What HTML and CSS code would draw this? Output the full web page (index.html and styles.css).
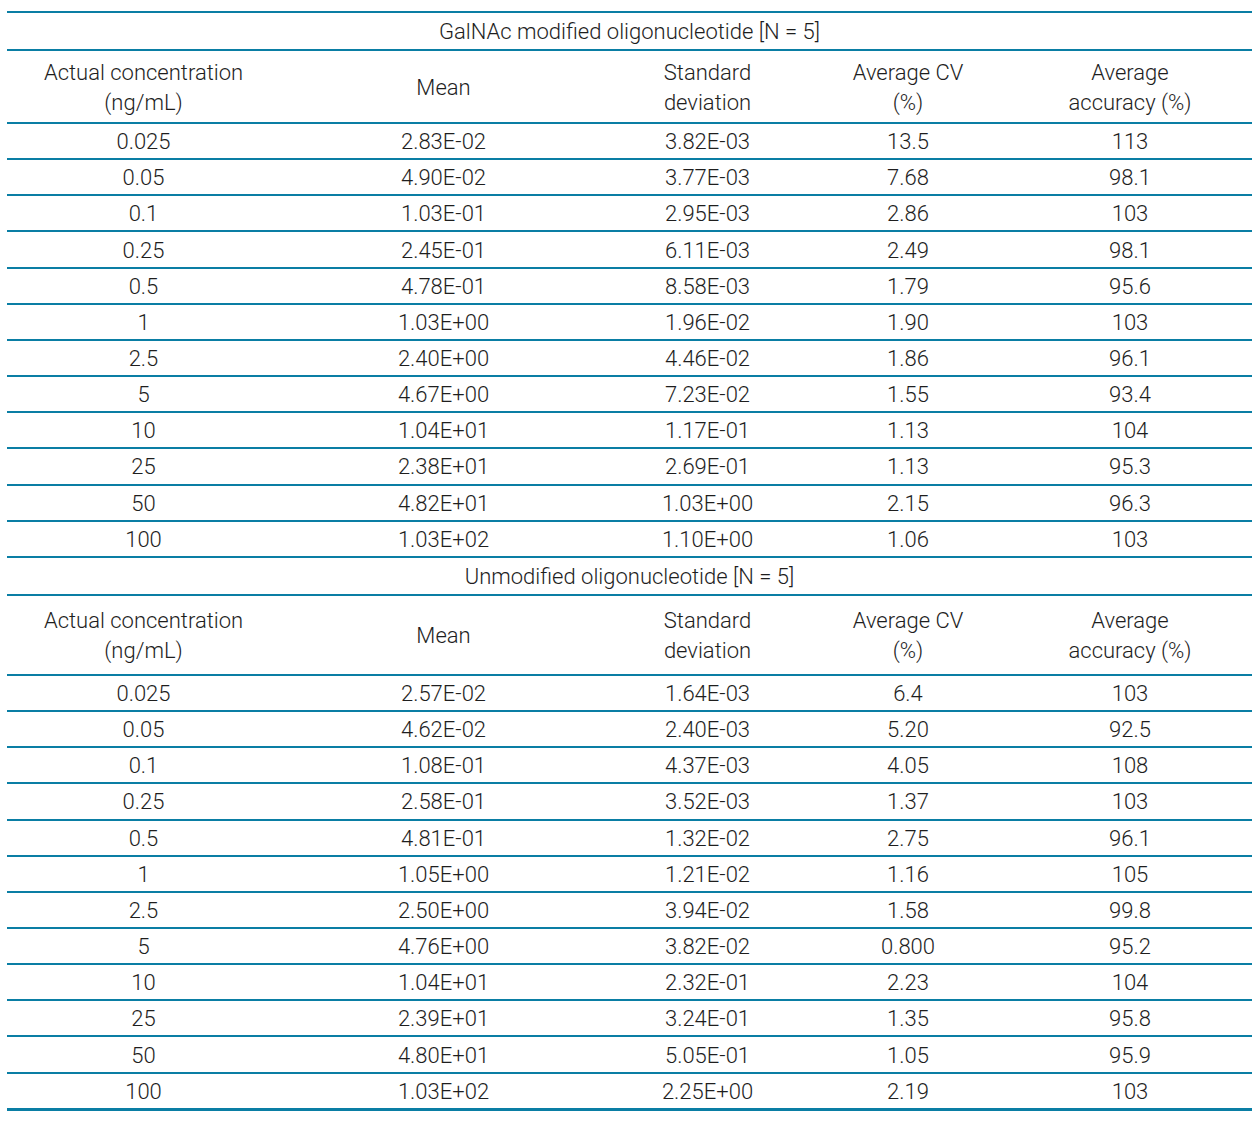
FILE: index.html
```html
<!DOCTYPE html>
<html lang="en">
<head>
<meta charset="utf-8">
<title>Oligonucleotide concentration table</title>
<link rel="stylesheet" href="styles.css">
</head>
<body>
<div class="page">
  <div class="tbl">
    <div class="row title"><div class="span">GalNAc modified oligonucleotide [N = 5]</div></div>
    <div class="row head head1">
      <div>Actual concentration<br>(ng/mL)</div><div>Mean</div><div>Standard<br>deviation</div><div>Average CV<br>(%)</div><div>Average<br>accuracy (%)</div>
    </div>
    <div class="row"><div>0.025</div><div>2.83E-02</div><div>3.82E-03</div><div>13.5</div><div>113</div></div>
    <div class="row"><div>0.05</div><div>4.90E-02</div><div>3.77E-03</div><div>7.68</div><div>98.1</div></div>
    <div class="row"><div>0.1</div><div>1.03E-01</div><div>2.95E-03</div><div>2.86</div><div>103</div></div>
    <div class="row"><div>0.25</div><div>2.45E-01</div><div>6.11E-03</div><div>2.49</div><div>98.1</div></div>
    <div class="row"><div>0.5</div><div>4.78E-01</div><div>8.58E-03</div><div>1.79</div><div>95.6</div></div>
    <div class="row"><div>1</div><div>1.03E+00</div><div>1.96E-02</div><div>1.90</div><div>103</div></div>
    <div class="row"><div>2.5</div><div>2.40E+00</div><div>4.46E-02</div><div>1.86</div><div>96.1</div></div>
    <div class="row"><div>5</div><div>4.67E+00</div><div>7.23E-02</div><div>1.55</div><div>93.4</div></div>
    <div class="row"><div>10</div><div>1.04E+01</div><div>1.17E-01</div><div>1.13</div><div>104</div></div>
    <div class="row"><div>25</div><div>2.38E+01</div><div>2.69E-01</div><div>1.13</div><div>95.3</div></div>
    <div class="row"><div>50</div><div>4.82E+01</div><div>1.03E+00</div><div>2.15</div><div>96.3</div></div>
    <div class="row"><div>100</div><div>1.03E+02</div><div>1.10E+00</div><div>1.06</div><div>103</div></div>
    <div class="row title"><div class="span">Unmodified oligonucleotide [N = 5]</div></div>
    <div class="row head head2">
      <div>Actual concentration<br>(ng/mL)</div><div>Mean</div><div>Standard<br>deviation</div><div>Average CV<br>(%)</div><div>Average<br>accuracy (%)</div>
    </div>
    <div class="row"><div>0.025</div><div>2.57E-02</div><div>1.64E-03</div><div>6.4</div><div>103</div></div>
    <div class="row"><div>0.05</div><div>4.62E-02</div><div>2.40E-03</div><div>5.20</div><div>92.5</div></div>
    <div class="row"><div>0.1</div><div>1.08E-01</div><div>4.37E-03</div><div>4.05</div><div>108</div></div>
    <div class="row"><div>0.25</div><div>2.58E-01</div><div>3.52E-03</div><div>1.37</div><div>103</div></div>
    <div class="row"><div>0.5</div><div>4.81E-01</div><div>1.32E-02</div><div>2.75</div><div>96.1</div></div>
    <div class="row"><div>1</div><div>1.05E+00</div><div>1.21E-02</div><div>1.16</div><div>105</div></div>
    <div class="row"><div>2.5</div><div>2.50E+00</div><div>3.94E-02</div><div>1.58</div><div>99.8</div></div>
    <div class="row"><div>5</div><div>4.76E+00</div><div>3.82E-02</div><div>0.800</div><div>95.2</div></div>
    <div class="row"><div>10</div><div>1.04E+01</div><div>2.32E-01</div><div>2.23</div><div>104</div></div>
    <div class="row"><div>25</div><div>2.39E+01</div><div>3.24E-01</div><div>1.35</div><div>95.8</div></div>
    <div class="row"><div>50</div><div>4.80E+01</div><div>5.05E-01</div><div>1.05</div><div>95.9</div></div>
    <div class="row last"><div>100</div><div>1.03E+02</div><div>2.25E+00</div><div>2.19</div><div>103</div></div>
  </div>
</div>
</body>
</html>
```

FILE: styles.css
```css
html, body {
  margin: 0;
  padding: 0;
  background: #ffffff;
}

.page {
  padding: 11px 7px 0 7px;
}

.tbl {
  width: 1245px;
  border-top: 2px solid #0a7ea4;
  font-family: Roboto, "Liberation Sans", sans-serif;
  font-weight: 300;
  font-size: 22px;
  color: #1e1e1e;
}

.row {
  display: grid;
  grid-template-columns: 273px 327px 201px 200px 244px;
  box-sizing: border-box;
  height: 36.17px;
  border-bottom: 2px solid #0a7ea4;
  align-items: center;
  text-align: center;
  line-height: 30px;
}

.row > div {
  padding-top: 2px;
}

.row.title {
  height: 38px;
}

.row.title .span {
  grid-column: 1 / -1;
}

.row.head {
  line-height: 30px;
}

.row.head1 {
  height: 73px;
}

.row.head2 {
  height: 80px;
}

.row.last {
  border-bottom-width: 3px;
  height: 37.17px;
}
```
